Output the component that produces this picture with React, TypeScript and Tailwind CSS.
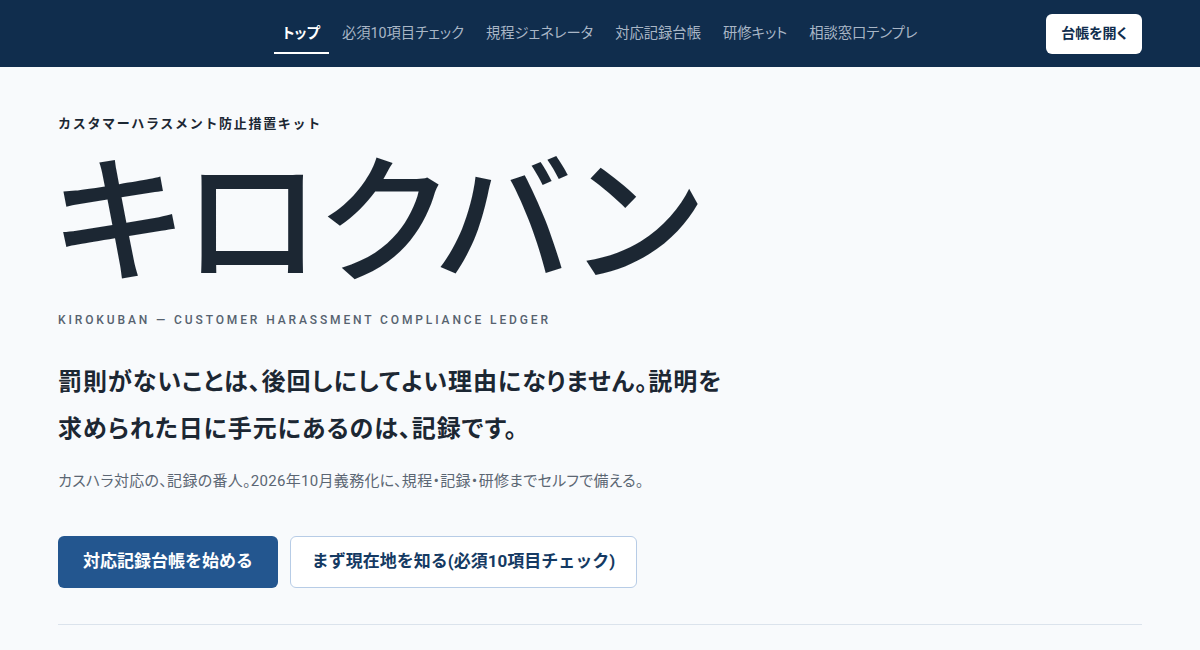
const font = "font-['Roboto','Noto_Sans_CJK_JP',sans-serif]";

const navItems = [
  "トップ",
  "必須10項目チェック",
  "規程ジェネレータ",
  "対応記録台帳",
  "研修キット",
  "相談窓口テンプレ",
];

export default function App() {
  return (
    <div className={`min-h-screen bg-[#f8fafc] text-[#1c2733] ${font}`}>
      <header className="h-[67px] bg-[#102d4d] grid grid-cols-[1fr_auto_1fr] items-center px-[58px]">
        <div />
        <nav className="flex items-center gap-[4px] h-full [font-feature-settings:'palt']">
          {navItems.map((item, i) => (
            <a
              key={item}
              className={
                i === 0
                  ? "h-full flex items-center px-[9px] text-[14.3px] font-bold text-white relative"
                  : "h-full flex items-center px-[9px] text-[14.3px] text-[#a9b6c6]"
              }
            >
              {item}
              {i === 0 && (
                <span className="absolute left-0 right-0 bottom-[13px] h-[2px] bg-white" />
              )}
            </a>
          ))}
        </nav>
        <div className="flex justify-end">
          <button className="h-[40px] px-[15px] rounded-[6px] bg-white text-[14px] font-bold text-[#102d4d] [font-feature-settings:'palt']">
            台帳を開く
          </button>
        </div>
      </header>

      <main className="px-[58px] pt-[47px]">
        <p className="text-[13px] leading-[19.5px] font-bold tracking-[0.13em] text-[#1c2733]">
          カスタマーハラスメント防止措置キット
        </p>
        <h1 className="mt-[11px] -ml-[4px] text-[139px] font-medium leading-[158px] text-[#1c2733] [font-feature-settings:'palt']">
          キロクバン
        </h1>
        <p className="mt-[8px] text-[12px] leading-[18px] font-medium tracking-[0.24em] text-[#56626f]">
          KIROKUBAN — CUSTOMER HARASSMENT COMPLIANCE LEDGER
        </p>
        <h2 className="mt-[30px] max-w-[680px] text-[24px] font-bold leading-[47px] tracking-[0.04em] text-[#1c2733] [font-feature-settings:'palt']">
          罰則がないことは、後回しにしてよい理由になりません。説明を求められた日に手元にあるのは、記録です。
        </h2>
        <p className="mt-[17px] text-[15px] leading-[22px] tracking-[0.02em] text-[#5b6673] [font-feature-settings:'palt']">
          カスハラ対応の、記録の番人。2026年10月義務化に、規程・記録・研修までセルフで備える。
        </p>
        <div className="mt-[44px] flex gap-[12px]">
          <button className="h-[52px] w-[220px] rounded-[6px] bg-[#23568f] text-[17px] font-bold text-white">
            対応記録台帳を始める
          </button>
          <button className="h-[52px] w-[347px] rounded-[6px] border border-[#b7cce6] bg-white text-[17px] font-bold text-[#153a63]">
            まず現在地を知る(必須10項目チェック)
          </button>
        </div>
        <div className="mt-[36px] h-px bg-[#dbe3ec]" />
      </main>
    </div>
  );
}
